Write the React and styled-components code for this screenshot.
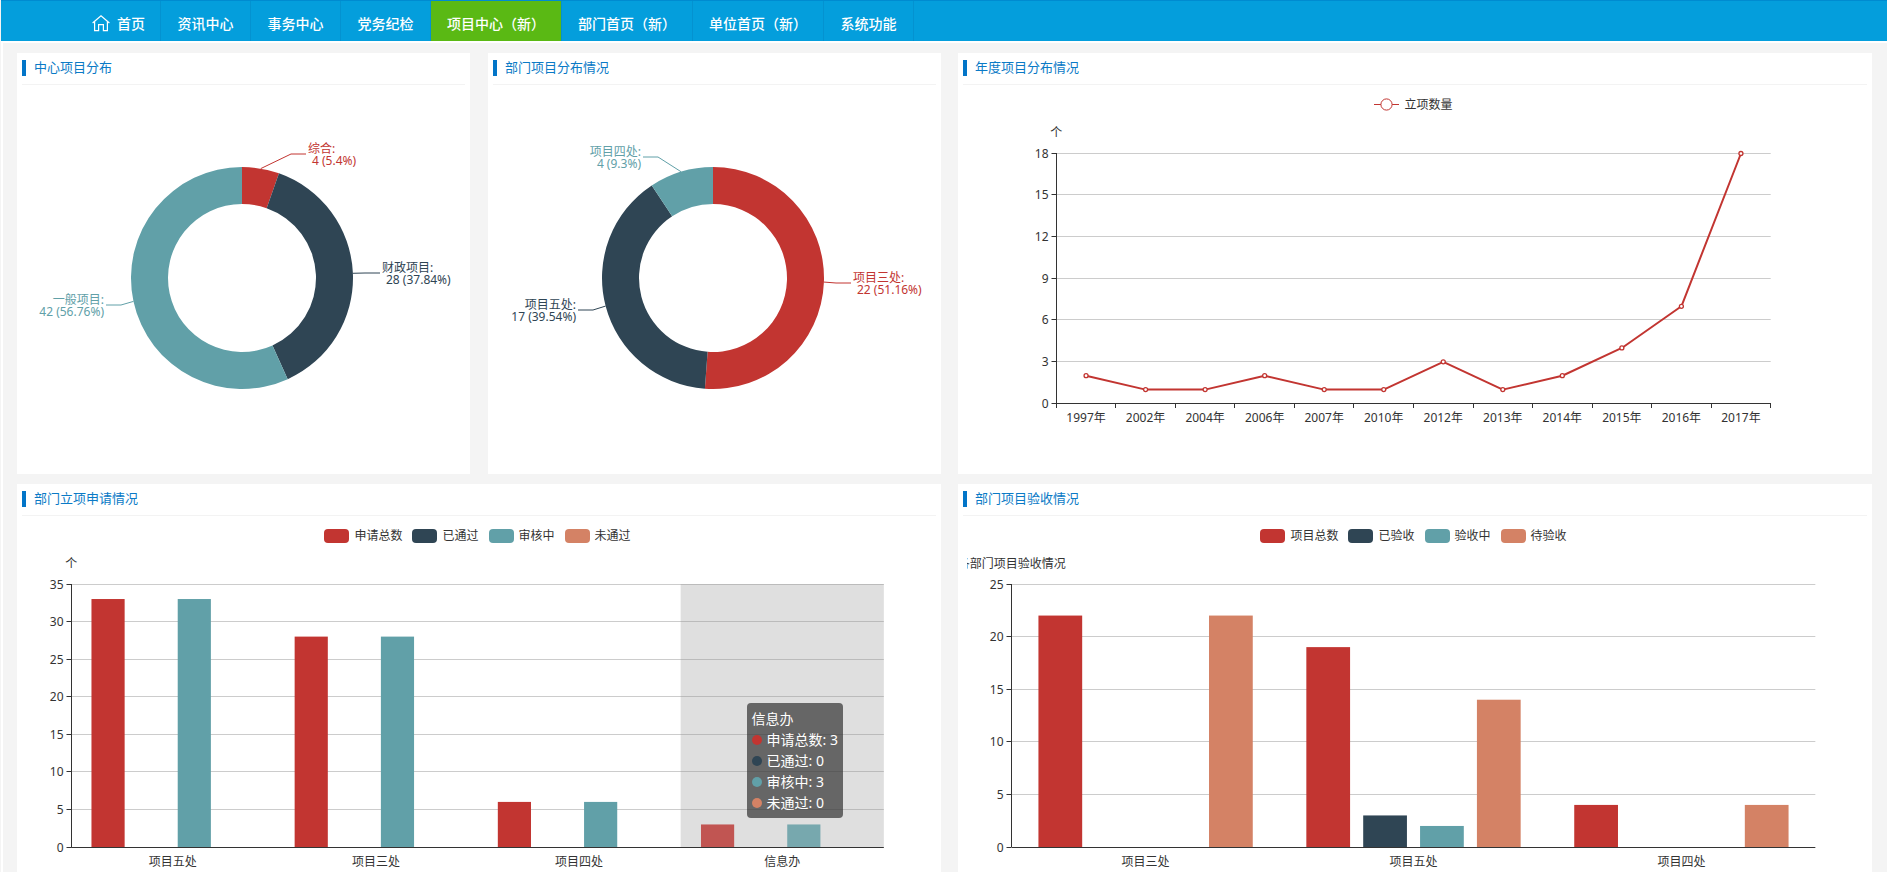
import React, { useLayoutEffect, useRef, useState } from 'react';
import styled, { createGlobalStyle } from 'styled-components';

const RED = '#c23531';
const NAVY = '#2f4554';
const TEAL = '#61a0a8';
const ORANGE = '#d48265';

const GlobalStyle = createGlobalStyle`
  *, *::before, *::after { box-sizing: border-box; }
  body {
    margin: 0;
    background: #f4f4f4;
    color: #333;
    font-family: 'Noto Sans', 'Noto Sans CJK SC', sans-serif;
    font-size: 12px;
  }
`;

const Page = styled.div`
  border-left: 1px solid #f4f4f4;
`;

const NavBar = styled.nav`
  display: flex;
  height: 43px;
  padding-left: 76px;
  background: #049edc;
  border-top: 1px solid #008bd0;
  border-bottom: 2px solid #fff;
`;

const NavLink = styled.a`
  display: flex;
  align-items: center;
  justify-content: center;
  gap: 7px;
  min-width: 90px;
  padding: 6px 16px 0;
  border-right: 1px solid #0492d0;
  background: ${({ $active }) => ($active ? '#5ab914' : 'transparent')};
  color: #fff;
  font-size: 14px;
  font-weight: 500;
  line-height: 20px;
  text-decoration: none;
  white-space: nowrap;
`;

const HomeLink = styled(NavLink)`
  min-width: 0;
  padding: 6px 15px 0;
`;

const Dashboard = styled.main`
  display: grid;
  grid-template-columns: minmax(0, 924fr) minmax(0, 914fr);
  gap: 10px 17px;
  padding: 10px 15px 0 14px;
  border-left: 2px solid #fff;
`;

const Pair = styled.div`
  display: grid;
  grid-template-columns: repeat(2, minmax(0, 1fr));
  gap: 18px;
`;

const Card = styled.section`
  min-width: 0;
  background: #fff;
`;

const CardHeader = styled.header`
  display: flex;
  align-items: flex-start;
  height: 32px;
  margin: 0 5px;
  padding-top: 7px;
  border-bottom: 1px solid #f3f3f3;
`;

const CardTitle = styled.h2`
  margin: 0;
  padding: 0 0 2px 8px;
  border-left: 4px solid #0275c8;
  color: #0a7ac6;
  font-size: 13px;
  font-weight: 400;
  line-height: 14px;
`;

const CardBody = styled.div`
  padding: 8px 12px ${({ $flush }) => ($flush ? '0' : '11px')} 9px;
`;

const ChartArea = styled.div`
  position: relative;
  min-width: 0;
`;

const Drawing = styled.svg`
  display: block;
  width: 100%;
  height: ${({ $height }) => $height}px;
  overflow: hidden;
`;

const Legend = styled.ul`
  display: flex;
  justify-content: center;
  gap: 10px;
  height: 24px;
  margin: 0;
  padding: 5px 0 0;
  list-style: none;
`;

const LegendItem = styled.li`
  display: flex;
  align-items: center;
  gap: 5px;
  height: 14px;
  line-height: 14px;
  white-space: nowrap;
`;

const Swatch = styled.span`
  width: 25px;
  height: 14px;
  border-radius: 4px;
  background: ${({ $color }) => $color};
`;

const Tooltip = styled.div`
  position: absolute;
  top: 179px;
  right: 86px;
  padding: 5px;
  border-radius: 4px;
  background: rgba(50, 50, 50, 0.7);
  color: #fff;
  font-size: 14px;
  line-height: 21px;
  white-space: nowrap;
`;

const TooltipRow = styled.div`
  display: flex;
  align-items: center;
  gap: 5px;
`;

const Dot = styled.span`
  width: 10px;
  height: 10px;
  border-radius: 50%;
  background: ${({ $color }) => $color};
`;

function useWidth() {
  const ref = useRef(null);
  const [width, setWidth] = useState(0);
  useLayoutEffect(() => {
    const node = ref.current;
    const measure = () => setWidth(node.clientWidth);
    measure();
    const observer = new ResizeObserver(measure);
    observer.observe(node);
    return () => observer.disconnect();
  }, []);
  return [ref, width];
}

function HomeIcon() {
  return (
    <svg width="18" height="18" viewBox="0 0 18 18" fill="none" stroke="#fff" strokeWidth="1.2" aria-hidden="true">
      <path d="M0.6 8 L9 0.8 L17.4 8" />
      <path d="M2.6 6.6 V15.6 H6.6 V9.6 H11.4 V15.6 H15.4 V6.6" />
    </svg>
  );
}

function Panel({ title, flush, children }) {
  return (
    <Card>
      <CardHeader>
        <CardTitle>{title}</CardTitle>
      </CardHeader>
      <CardBody $flush={flush}>{children}</CardBody>
    </Card>
  );
}

function slicePath(cx, cy, inner, outer, from, to) {
  const point = (r, a) => `${cx + r * Math.sin(a)} ${cy - r * Math.cos(a)}`;
  const large = to - from > Math.PI ? 1 : 0;
  return [
    `M${point(outer, from)}`,
    `A${outer} ${outer} 0 ${large} 1 ${point(outer, to)}`,
    `L${point(inner, to)}`,
    `A${inner} ${inner} 0 ${large} 0 ${point(inner, from)}`,
    'Z',
  ].join(' ');
}

function DonutChart({ label, slices }) {
  const [ref, width] = useWidth();
  const height = 370;
  const cx = width / 2;
  const cy = height / 2;
  const base = Math.min(width, height) / 2;
  const outer = base * 0.6;
  const inner = base * 0.4;
  const total = slices.reduce((sum, s) => sum + s.value, 0);
  let angle = 0;
  const parts = slices.map((s) => {
    const from = angle;
    angle += (s.value / total) * Math.PI * 2;
    return { ...s, from, to: angle, mid: (from + angle) / 2 };
  });
  return (
    <ChartArea ref={ref}>
      <Drawing $height={height} role="img" aria-label={label}>
        {width > 0 &&
          parts.map((p) => {
            const right = p.mid < Math.PI;
            const dir = right ? 1 : -1;
            const [ex, ey] = p.elbow;
            const tx = cx + ex + dir * 17;
            const ty = cy + ey;
            const sx = cx + outer * Math.sin(p.mid);
            const sy = cy - outer * Math.cos(p.mid);
            return (
              <g key={p.name}>
                <path d={slicePath(cx, cy, inner, outer, p.from, p.to)} fill={p.color} />
                <polyline
                  points={`${sx},${sy} ${cx + ex},${ty} ${cx + ex + dir * 15},${ty}`}
                  fill="none"
                  stroke={p.color}
                />
                <text fill={p.color} fontSize="12" textAnchor={right ? 'start' : 'end'}>
                  <tspan x={tx} y={ty - 1}>{`${p.name}:`}</tspan>
                  <tspan x={right ? tx + 4 : tx} y={ty + 11}>{`${p.value} (${p.percent})`}</tspan>
                </text>
              </g>
            );
          })}
      </Drawing>
    </ChartArea>
  );
}

const crisp = (v) => Math.floor(v) + 0.5;

// Hovered bars are drawn a tenth brighter than their series colour.
const lift = (hex) => {
  const channels = [1, 3, 5].map((i) => Math.min(255, Math.round(parseInt(hex.slice(i, i + 2), 16) * 1.1)));
  return `rgb(${channels.join(',')})`;
};

function Axes({ left, right, top, bottom, max, step, name, categories, ticks }) {
  const values = [];
  for (let v = 0; v <= max; v += step) values.push(v);
  const y = (v) => crisp(bottom - (v / max) * (bottom - top));
  const band = (right - left) / categories.length;
  const x0 = crisp(left);
  return (
    <g fontSize="12" fill="#333">
      {values.map((v) => (
        <g key={v}>
          {v > 0 && <line x1={left} x2={right} y1={y(v)} y2={y(v)} stroke="#ccc" />}
          <line x1={x0 - 5} x2={x0} y1={y(v)} y2={y(v)} stroke="#333" />
          <text x={x0 - 8} y={y(v) + 4} textAnchor="end">{v}</text>
        </g>
      ))}
      <line x1={x0} x2={x0} y1={top} y2={bottom} stroke="#333" />
      {ticks &&
        [...categories, ''].map((c, i) => (
          <line
            key={`tick-${i}`}
            x1={crisp(left + band * i)}
            x2={crisp(left + band * i)}
            y1={bottom}
            y2={bottom + 5}
            stroke="#333"
          />
        ))}
      {categories.map((c, i) => (
        <text key={c} x={left + band * (i + 0.5)} y={bottom + 19} textAnchor="middle">{c}</text>
      ))}
      <text x={left} y={top - 16} textAnchor="middle">{name}</text>
    </g>
  );
}

function LineChart({ label, series, categories, values }) {
  const [ref, width] = useWidth();
  const box = { left: width * 0.1, right: width * 0.9, top: 36, bottom: 286 };
  const max = 18;
  const band = (box.right - box.left) / categories.length;
  const points = values.map((v, i) => [
    box.left + band * (i + 0.5),
    box.bottom + 0.5 - (v / max) * (box.bottom - box.top),
  ]);
  return (
    <ChartArea ref={ref}>
      <Legend>
        <LegendItem>
          <svg width="25" height="14" fill="#fff" stroke={RED} aria-hidden="true">
            <path d="M0 6.5 H25" />
            <circle cx="12.5" cy="6.5" r="5.6" />
          </svg>
          {series}
        </LegendItem>
      </Legend>
      <Drawing $height={346} role="img" aria-label={label}>
        {width > 0 && (
          <>
            <Axes {...box} max={max} step={3} name="个" categories={categories} ticks />
            <line x1={box.left} x2={box.right} y1={box.bottom + 0.5} y2={box.bottom + 0.5} stroke="#333" />
            <polyline points={points.map((p) => p.join(',')).join(' ')} fill="none" stroke={RED} strokeWidth="2" strokeLinejoin="bevel" />
            {points.map(([x, y]) => (
              <circle key={x} cx={x} cy={y} r="2" fill="#fff" stroke={RED} strokeWidth="1.3" />
            ))}
          </>
        )}
      </Drawing>
    </ChartArea>
  );
}

function BarChart({ label, series, categories, max, name, active, children }) {
  const [ref, width] = useWidth();
  const box = { left: width * 0.05, right: width * 0.95, top: 36, bottom: 299 };
  const band = (box.right - box.left) / categories.length;
  const bar = (band * 0.8) / (series.length + (series.length - 1) * 0.3);
  return (
    <ChartArea ref={ref}>
      <Legend>
        {series.map((s) => (
          <LegendItem key={s.name}>
            <Swatch $color={s.color} />
            {s.name}
          </LegendItem>
        ))}
      </Legend>
      <Drawing $height={324} role="img" aria-label={label}>
        {width > 0 && (
          <>
            <Axes {...box} max={max} step={5} name={name} categories={categories} />
            {categories.map((c, i) =>
              series.map((s, j) => {
                const h = (s.values[i] / max) * (box.bottom - box.top);
                return (
                  <rect
                    key={`${c}-${s.name}`}
                    x={box.left + band * (i + 0.1) + bar * 1.3 * j}
                    y={box.bottom - h}
                    width={bar}
                    height={h}
                    fill={i === active ? lift(s.color) : s.color}
                  />
                );
              }),
            )}
            {active !== undefined && (
              <rect
                x={box.left + band * active}
                y={box.top}
                width={band}
                height={box.bottom - box.top}
                fill="rgba(150,150,150,0.3)"
              />
            )}
            <line x1={box.left} x2={box.right} y1={box.bottom + 0.5} y2={box.bottom + 0.5} stroke="#333" />
          </>
        )}
      </Drawing>
      {children}
    </ChartArea>
  );
}

const navItems = ['资讯中心', '事务中心', '党务纪检', '项目中心（新）', '部门首页（新）', '单位首页（新）', '系统功能'];
const activeItem = '项目中心（新）';

const centerSlices = [
  { name: '综合', value: 4, percent: '5.4%', color: RED, elbow: [49, -124] },
  { name: '财政项目', value: 28, percent: '37.84%', color: NAVY, elbow: [123, -5] },
  { name: '一般项目', value: 42, percent: '56.76%', color: TEAL, elbow: [-121, 27] },
];

const departmentSlices = [
  { name: '项目三处', value: 22, percent: '51.16%', color: RED, elbow: [123, 5] },
  { name: '项目五处', value: 17, percent: '39.54%', color: NAVY, elbow: [-120, 32] },
  { name: '项目四处', value: 4, percent: '9.3%', color: TEAL, elbow: [-55, -121] },
];

const years = [1997, 2002, 2004, 2006, 2007, 2010, 2012, 2013, 2014, 2015, 2016, 2017].map((y) => `${y}年`);
const yearValues = [2, 1, 1, 2, 1, 1, 3, 1, 2, 4, 7, 18];

const applyCategories = ['项目五处', '项目三处', '项目四处', '信息办'];
const applySeries = [
  { name: '申请总数', color: RED, values: [33, 28, 6, 3] },
  { name: '已通过', color: NAVY, values: [0, 0, 0, 0] },
  { name: '审核中', color: TEAL, values: [33, 28, 6, 3] },
  { name: '未通过', color: ORANGE, values: [0, 0, 0, 0] },
];

const acceptCategories = ['项目三处', '项目五处', '项目四处'];
const acceptSeries = [
  { name: '项目总数', color: RED, values: [22, 19, 4] },
  { name: '已验收', color: NAVY, values: [0, 3, 0] },
  { name: '验收中', color: TEAL, values: [0, 2, 0] },
  { name: '待验收', color: ORANGE, values: [22, 14, 4] },
];

export default function App() {
  const active = 3;
  return (
    <>
      <GlobalStyle />
      <Page>
        <NavBar>
          <HomeLink href="#home">
            <HomeIcon />
            首页
          </HomeLink>
          {navItems.map((item) => (
            <NavLink
              key={item}
              href={`#${item}`}
              $active={item === activeItem}
              aria-current={item === activeItem ? 'page' : undefined}
            >
              {item}
            </NavLink>
          ))}
        </NavBar>
        <Dashboard>
          <Pair>
            <Panel title="中心项目分布">
              <DonutChart label="中心项目分布" slices={centerSlices} />
            </Panel>
            <Panel title="部门项目分布情况">
              <DonutChart label="部门项目分布情况" slices={departmentSlices} />
            </Panel>
          </Pair>
          <Panel title="年度项目分布情况">
            <LineChart label="年度项目分布情况" series="立项数量" categories={years} values={yearValues} />
          </Panel>
          <Panel title="部门立项申请情况" flush>
            <BarChart
              label="部门立项申请情况"
              series={applySeries}
              categories={applyCategories}
              max={35}
              name="个"
              active={active}
            >
              <Tooltip role="tooltip">
                {applyCategories[active]}
                {applySeries.map((s) => (
                  <TooltipRow key={s.name}>
                    <Dot $color={s.color} />
                    {`${s.name}: ${s.values[active]}`}
                  </TooltipRow>
                ))}
              </Tooltip>
            </BarChart>
          </Panel>
          <Panel title="部门项目验收情况" flush>
            <BarChart
              label="部门项目验收情况"
              series={acceptSeries}
              categories={acceptCategories}
              max={25}
              name="各部门项目验收情况"
            />
          </Panel>
        </Dashboard>
      </Page>
    </>
  );
}
